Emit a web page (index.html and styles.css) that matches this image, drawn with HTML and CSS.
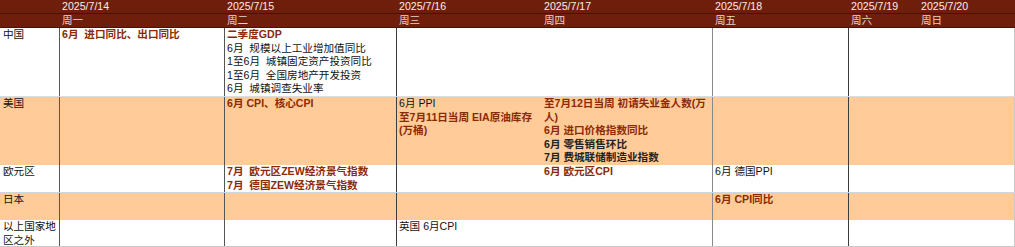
FILE: index.html
```html
<!DOCTYPE html>
<html lang="zh-CN">

<head>
    <meta charset="UTF-8">
    <meta name="viewport" content="width=device-width, initial-scale=1.0">
    <title>本周重要经济数据</title>
    <link rel="stylesheet" href="styles.css">
</head>

<body>
    <div class="calendar">
        <!-- 表头：日期 -->
        <div class="row head date-row">
            <div class="cell"></div>
            <div class="cell">2025/7/14</div>
            <div class="cell">2025/7/15</div>
            <div class="cell">2025/7/16</div>
            <div class="cell">2025/7/17</div>
            <div class="cell">2025/7/18</div>
            <div class="cell">2025/7/19</div>
            <div class="cell">2025/7/20</div>
        </div>
        <!-- 表头：星期 -->
        <div class="row head week-row">
            <div class="cell"></div>
            <div class="cell">周一</div>
            <div class="cell">周二</div>
            <div class="cell">周三</div>
            <div class="cell">周四</div>
            <div class="cell">周五</div>
            <div class="cell">周六</div>
            <div class="cell">周日</div>
        </div>

        <div class="row body china">
            <div class="cell region">中国</div>
            <div class="cell"><p class="hot">6月  进口同比、出口同比</p></div>
            <div class="cell">
                <p class="hot">二季度GDP</p>
                <p>6月  规模以上工业增加值同比</p>
                <p>1至6月  城镇固定资产投资同比</p>
                <p>1至6月  全国房地产开发投资</p>
                <p>6月  城镇调查失业率</p>
            </div>
            <div class="cell"></div>
            <div class="cell"></div>
            <div class="cell"></div>
            <div class="cell"></div>
            <div class="cell"></div>
        </div>

        <div class="row body us shade">
            <div class="cell region">美国</div>
            <div class="cell"></div>
            <div class="cell"><p class="hot">6月 CPI、核心CPI</p></div>
            <div class="cell">
                <p>6月 PPI</p>
                <p class="hot">至7月11日当周 EIA原油库存(万桶)</p>
            </div>
            <div class="cell">
                <p class="hot">至7月12日当周 初请失业金人数(万人)</p>
                <p class="hot">6月 进口价格指数同比</p>
                <p class="strong">6月 零售销售环比</p>
                <p class="strong">7月 费城联储制造业指数</p>
            </div>
            <div class="cell"></div>
            <div class="cell"></div>
            <div class="cell"></div>
        </div>

        <div class="row body euro">
            <div class="cell region">欧元区</div>
            <div class="cell"></div>
            <div class="cell">
                <p class="hot">7月  欧元区ZEW经济景气指数</p>
                <p class="hot">7月  德国ZEW经济景气指数</p>
            </div>
            <div class="cell"></div>
            <div class="cell"><p class="hot">6月 欧元区CPI</p></div>
            <div class="cell"><p>6月 德国PPI</p></div>
            <div class="cell"></div>
            <div class="cell"></div>
        </div>

        <div class="row body japan shade">
            <div class="cell region">日本</div>
            <div class="cell"></div>
            <div class="cell"></div>
            <div class="cell"></div>
            <div class="cell"></div>
            <div class="cell"><p class="hot">6月 CPI同比</p></div>
            <div class="cell"></div>
            <div class="cell"></div>
        </div>

        <div class="row body other">
            <div class="cell region">以上国家地区之外</div>
            <div class="cell"></div>
            <div class="cell"></div>
            <div class="cell"><p>英国 6月CPI</p></div>
            <div class="cell"></div>
            <div class="cell"></div>
            <div class="cell"></div>
            <div class="cell"></div>
        </div>
    </div>
</body>

</html>
```

FILE: styles.css
```css
* {
    box-sizing: border-box;
}

body {
    margin: 0;
    background: #fff;
    font-family: "Liberation Sans", "Noto Sans CJK SC", sans-serif;
    font-size: 10.6px;
    color: #111;
}

.calendar {
    width: 1015px;
}

.row {
    display: grid;
    grid-template-columns: 60px 165px 172px 145px 171px 136px 70px 96px;
}

.cell {
    padding-left: 2px;
    overflow: hidden;
}

.cell p {
    margin: 0;
    white-space: pre-wrap;
}

/* 表头 */
.head {
    height: 14px;
    background: #6f1e0c;
    border-bottom: 1px solid #4a1205;
    line-height: 13px;
}

.date-row {
    color: #f6eeea;
}

.week-row {
    color: #ead2ca;
}

/* 表体 */
.body {
    line-height: 13.6px;
}

.body .cell:nth-child(1),
.body .cell:nth-child(2) {
    border-right: 1px solid #555;
}

.body .cell:nth-child(3) {
    border-right: 1px solid #3c3c3c;
}

.body .cell:nth-child(5) {
    border-right: 1px solid #8a8a8a;
}

.body .cell:nth-child(6) {
    border-right: 1px solid #3c3c3c;
}

.body .cell:nth-child(8) {
    border-right: 1px solid #c8c8c8;
}

.shade {
    background: #ffcc99;
}

.china {
    height: 69px;
    border-bottom: 1px solid #dcdcdc;
}

.us {
    height: 68px;
}

.euro {
    height: 28px;
    border-bottom: 1px solid #cfd6de;
}

.japan {
    height: 27px;
}

.other {
    height: 27px;
    border-bottom: 1px solid #c8c8c8;
}

.region {
    padding-left: 3px;
}

.hot {
    font-weight: bold;
    color: #8b2a05;
}

.strong {
    font-weight: bold;
    color: #222;
}
```
